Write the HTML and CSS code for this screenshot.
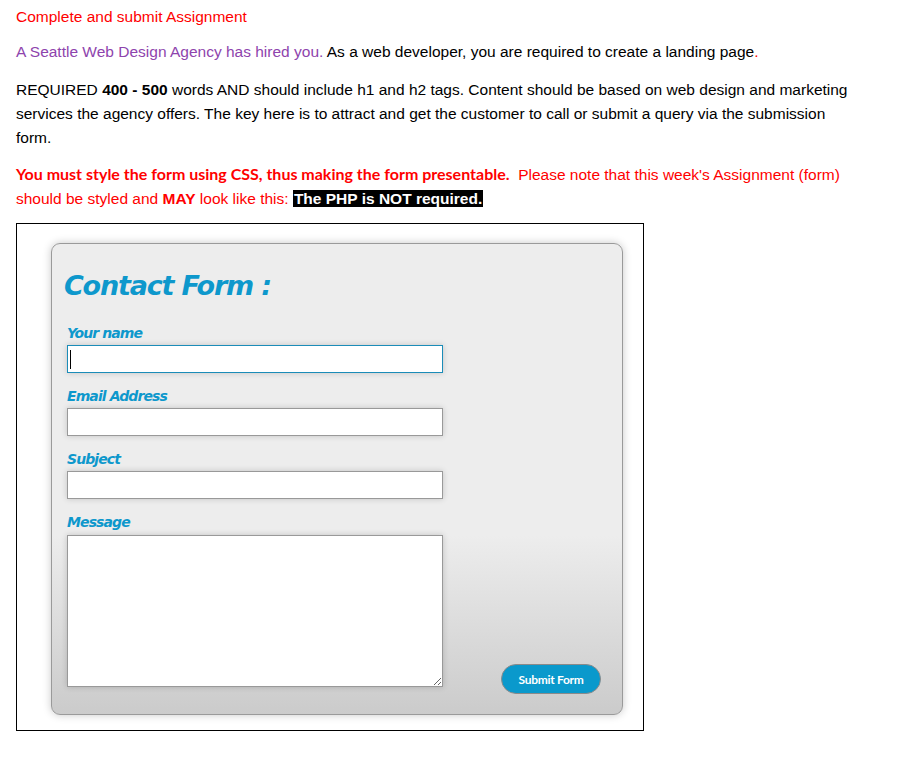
FILE: index.html
```html
<!DOCTYPE html>
<html>
<head>
<meta charset="utf-8">
<title>Assignment</title>
<link rel="stylesheet" href="styles.css">
</head>
<body>
<div class="page">
  <p class="p1 red">Complete and submit Assignment</p>
  <p class="p2"><span class="purple">A Seattle Web Design Agency has hired you.</span> As a web developer, you are required to create a landing page<span class="red">.</span></p>
  <p class="p3">REQUIRED <b>400 - 500</b> words AND should include h1 and h2 tags. Content should be based on web design and marketing services the agency offers. The key here is to attract and get the customer to call or submit a query via the submission form.</p>
  <p class="p4 red"><span class="lead">You must style the form using CSS, thus making the form presentable.</span>&nbsp; Please note that this week's Assignment (form) should be styled and <b>MAY</b> look like this: <span class="hl">The PHP is NOT required.</span></p>
  <div class="frame">
    <form class="panel" onsubmit="return false">
      <h1 class="title">Contact Form :</h1>
      <label class="lbl">Your name</label>
      <input class="field focused" type="text">
      <label class="lbl">Email Address</label>
      <input class="field" type="text">
      <label class="lbl">Subject</label>
      <input class="field" type="text">
      <label class="lbl">Message</label>
      <div class="row">
        <textarea class="msg"></textarea>
        <button class="submit" type="submit">Submit Form</button>
      </div>
    </form>
  </div>
</div>
</body>
</html>
```
FILE: styles.css
```css
html, body {
  margin: 0;
  padding: 0;
  background: #ffffff;
}
.page {
  padding-left: 16px;
  width: 840px;
  font-family: "Liberation Sans", Arial, sans-serif;
  font-size: 15.5px;
  line-height: 24px;
  color: #000;
}
.page p {
  margin: 0;
}
.p1 { padding-top: 5px; }
.page .p2 { margin-top: 11px; }
.page .p3 { margin-top: 14px; }
.page .p4 { margin-top: 12px; }
.red { color: #ff0000; }
.purple { color: #8e44ad; }
.lead {
  font-family: Lato, "Liberation Sans", sans-serif;
  font-weight: bold;
  font-size: 16px;
}
.hl {
  background: #000;
  color: #fff;
  font-weight: bold;
  padding: 0 1px;
}
.frame {
  margin-top: 12px;
  border: 1px solid #000;
  padding: 19px 0 0 34px;
  box-sizing: content-box;
  width: 592px;
  height: 487px;
}
.panel {
  width: 540px;
  height: 436px;
  border: 1px solid #9a9a9a;
  border-radius: 9px;
  background: linear-gradient(#ededed 0%, #ededed 62%, #cbcbcb 100%);
  box-shadow: 0 0 8px rgba(0,0,0,0.22);
  padding: 14px 15px 20px 15px;
  display: flex;
  flex-direction: column;
  align-items: flex-start;
}
.panel > * {
  flex-shrink: 0;
}
.title {
  margin: 12px 0 0 -3px;
  font-family: Tahoma, "DejaVu Sans", sans-serif;
  font-style: italic;
  font-weight: bold;
  font-size: 27px;
  line-height: 32px;
  color: #0e98cc;
  letter-spacing: -1.2px;
}
.lbl {
  font-family: Tahoma, "DejaVu Sans", sans-serif;
  font-style: italic;
  font-weight: bold;
  font-size: 14px;
  line-height: 17px;
  color: #0e98cc;
  letter-spacing: -0.9px;
  margin-top: 15px;
  margin-bottom: 3px;
}
.title + .lbl { margin-top: 23px; }
.field {
  width: 376px;
  height: 28px;
  box-sizing: border-box;
  border: 1px solid #999;
  background: #fff;
  box-shadow: 0 0 6px rgba(0,0,0,0.18);
  margin: 0;
  padding: 0 4px;
  outline: none;
}
.focused {
  border-color: #1b8cb8;
  background: #fff linear-gradient(#000, #000) no-repeat 2px 4px / 1px 19px;
}
.row {
  display: flex;
  align-items: flex-end;
  width: 100%;
  margin-top: 1px;
}
.msg {
  width: 376px;
  height: 152px;
  box-sizing: border-box;
  border: 1px solid #999;
  background: #fff;
  box-shadow: 0 0 6px rgba(0,0,0,0.18);
  margin: 0 0 7px 0;
  padding: 4px;
  resize: both;
  outline: none;
}
.submit {
  margin-left: auto;
  margin-right: 6px;
  width: 100px;
  height: 30px;
  border: 1px solid #8a8a8a;
  border-radius: 15px;
  background: #0a99cc;
  color: #fff;
  font-family: Lato, "Liberation Sans", sans-serif;
  font-weight: bold;
  font-size: 12px;
  letter-spacing: -0.3px;
  padding: 0;
  cursor: pointer;
}
```
